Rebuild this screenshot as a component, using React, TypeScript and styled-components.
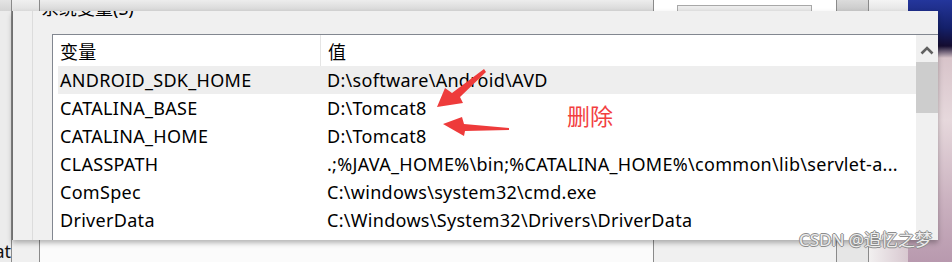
import React from 'react'
import styled, { createGlobalStyle } from 'styled-components'

const GlobalStyle = createGlobalStyle`
  html, body {
    margin: 0;
    padding: 0;
    background: #ffffff;
  }
  body {
    font-family: "Noto Sans", "Noto Sans CJK SC", sans-serif;
  }
`

const Screen = styled.div`
  position: relative;
  width: 952px;
  height: 262px;
  overflow: hidden;
`

// window lying behind the dialog
const BackWindow = styled.div`
  display: grid;
  grid-template-columns: 12px 28px 614px 183px 32px 39px 44px;
  height: 100%;
`

const BackCol = styled.div<{ top: string; bottom: string; line?: boolean }>`
  display: flex;
  flex-direction: column;
  border-right: ${({ line }) => (line ? '1px solid #8a8a8a' : 'none')};
  & > div:first-child {
    height: 11px;
    background: ${({ top }) => top};
  }
  & > div:last-child {
    flex: 1;
    background: ${({ bottom }) => bottom};
  }
`

const TopButton = styled.div`
  margin: 5px 0 0 23px;
  width: 135px;
  height: 6px;
  border: 1px solid #a8a8a8;
  border-bottom: none;
  box-sizing: border-box;
`

const ClippedText = styled.div`
  display: flex;
  justify-content: flex-end;
  align-items: flex-end;
  overflow: hidden;
  font-size: 18px;
  line-height: 22px;
  color: #111;
  white-space: nowrap;
`

const Desktop = styled.div`
  background: linear-gradient(
    180deg,
    #24369c 0px,
    #14206a 28px,
    #140c30 46px,
    #d8c4ca 58px,
    #e6d8dc 120px,
    #cbb2c0 200px,
    #b899ae 262px
  );
`

const Dialog = styled.div`
  position: absolute;
  left: 12px;
  top: 11px;
  width: 926px;
  height: 229px;
  background: #f0f0f0;
  border-left: 1px solid #707070;
  box-sizing: border-box;
  overflow: hidden;
  box-shadow: 0 3px 5px rgba(0, 0, 0, 0.28);
  display: flex;
`

const GroupBox = styled.div`
  flex: 1;
  margin-left: 19px;
  border-left: 1px solid #dcdcdc;
  display: flex;
  flex-direction: column;
`

const GroupTitle = styled.div`
  margin: -15px 0 0 8px;
  font-size: 18px;
  line-height: 24px;
  color: #000;
`

const ListBox = styled.div`
  flex: 1;
  margin: 14px 0 0 19px;
  border-top: 1px solid #828790;
  border-left: 1px solid #828790;
  background: #ffffff;
  display: flex;
`

const Table = styled.div`
  flex: 1;
  min-width: 0;
  display: flex;
  flex-direction: column;
  font-size: 18px;
  letter-spacing: 0.3px;
  color: #000;
`

const HeaderRow = styled.div`
  display: grid;
  grid-template-columns: 267px 1fr;
  height: 31px;
  align-items: center;
`

const HeaderCell = styled.div<{ divider?: boolean }>`
  height: 100%;
  display: flex;
  align-items: center;
  padding-left: 7px;
  border-left: ${({ divider }) => (divider ? '1px solid #e5e5e5' : 'none')};
`

const Row = styled.div<{ selected?: boolean }>`
  display: grid;
  grid-template-columns: 261px 1fr;
  height: 28px;
  margin-left: 5px;
  align-items: center;
  background: ${({ selected }) => (selected ? '#eeeeee' : 'transparent')};
`

const Cell = styled.div<{ pad: number }>`
  padding-left: ${({ pad }) => pad}px;
  white-space: nowrap;
  overflow: hidden;
  text-overflow: ellipsis;
  line-height: 28px;
`

const ScrollBar = styled.div`
  width: 22px;
  background: #f0f0f0;
  display: flex;
  flex-direction: column;
`

const ScrollArrow = styled.div`
  height: 27px;
  display: flex;
  align-items: center;
  justify-content: center;
  padding-top: 3px;
  box-sizing: border-box;
`

const ScrollThumb = styled.div`
  height: 51px;
  background: #cdcdcd;
`

const Overlay = styled.svg`
  position: absolute;
  left: 0;
  top: 0;
  pointer-events: none;
`

const Note = styled.div`
  position: absolute;
  left: 567px;
  top: 100px;
  font-size: 23px;
  line-height: 30px;
  color: #f2403f;
  font-family: "Noto Sans CJK SC", sans-serif;
`

const Watermark = styled.div`
  position: absolute;
  left: 799px;
  top: 229px;
  font-size: 17px;
  line-height: 22px;
  color: #ededed;
  text-shadow: -1px 0 #8c8c8c, 1px 0 #8c8c8c, 0 -1px #8c8c8c, 0 1px #8c8c8c;
  font-family: "Noto Sans", "Noto Sans CJK SC", sans-serif;
  white-space: nowrap;
`

const rows = [
  ['ANDROID_SDK_HOME', 'D:\\software\\Android\\AVD'],
  ['CATALINA_BASE', 'D:\\Tomcat8'],
  ['CATALINA_HOME', 'D:\\Tomcat8'],
  ['CLASSPATH', '.;%JAVA_HOME%\\bin;%CATALINA_HOME%\\common\\lib\\servlet-a...'],
  ['ComSpec', 'C:\\windows\\system32\\cmd.exe'],
  ['DriverData', 'C:\\Windows\\System32\\Drivers\\DriverData'],
]

export default function App() {
  return (
    <Screen>
      <GlobalStyle />
      <BackWindow>
        <BackCol top="linear-gradient(#e4e4e4, #d4d4d4)" bottom="#ececec" line>
          <div />
          <ClippedText>Dat</ClippedText>
        </BackCol>
        <BackCol top="linear-gradient(#f0f0f0, #e0e0e0)" bottom="#f0f0f0" line>
          <div />
          <div />
        </BackCol>
        <BackCol top="linear-gradient(#ededed, #d6d6d6)" bottom="#fbfbfb" line>
          <div />
          <div />
        </BackCol>
        <BackCol top="linear-gradient(#eeeeee, #dadada)" bottom="#f0f0f0" line>
          <TopButton />
          <div />
        </BackCol>
        <BackCol top="linear-gradient(#dcdcdc, #c8c8c8)" bottom="#e6e6e6" line>
          <div />
          <div />
        </BackCol>
        <BackCol top="linear-gradient(#f4f4f4, #e4e4e4)" bottom="linear-gradient(90deg, #f2f0f0, #d8c8d0)">
          <div />
          <div />
        </BackCol>
        <Desktop />
      </BackWindow>

      <Dialog>
        <GroupBox>
          <GroupTitle>系统变量(S)</GroupTitle>
          <ListBox>
            <Table>
              <HeaderRow>
                <HeaderCell>变量</HeaderCell>
                <HeaderCell divider>值</HeaderCell>
              </HeaderRow>
              {rows.map(([name, value], i) => (
                <Row key={name} selected={i === 0}>
                  <Cell pad={2}>{name}</Cell>
                  <Cell pad={8}>{value}</Cell>
                </Row>
              ))}
            </Table>
            <ScrollBar>
              <ScrollArrow>
                <svg width="14" height="9" viewBox="0 0 14 9">
                  <path d="M1.5 7.5 L7 2 L12.5 7.5" fill="none" stroke="#606060" strokeWidth="2.6" />
                </svg>
              </ScrollArrow>
              <ScrollThumb />
            </ScrollBar>
          </ListBox>
        </GroupBox>
      </Dialog>

      <Overlay width="952" height="262" viewBox="0 0 952 262">
        {/* upper arrow, pointing down-left at the first Tomcat8 */}
        <polygon
          points="484,69 486,72 460,97 463,103 437,107 445,88 452,93"
          fill="#ee3b3b"
        />
        {/* lower arrow, pointing left at the second Tomcat8 */}
        <polygon
          points="509,128 509,130 465,131 464,136 443,124 462,117 464,124"
          fill="#ee3b3b"
        />
      </Overlay>
      <Note>删除</Note>
      <Watermark>CSDN @追忆之梦</Watermark>
    </Screen>
  )
}
